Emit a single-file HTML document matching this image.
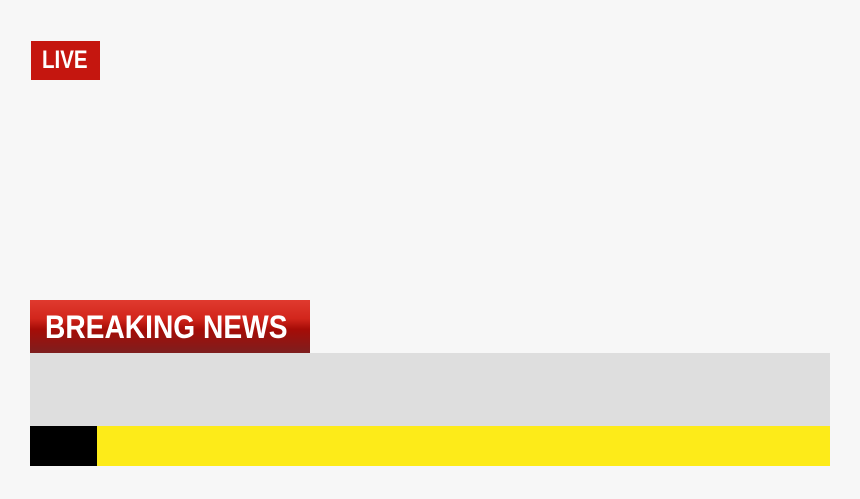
<!DOCTYPE html>
<html><head><style>
body{margin:0;width:860px;height:499px;background:#f7f7f7;position:relative;overflow:hidden;font-family:"Liberation Sans",sans-serif}
div{position:absolute}
.live{left:31px;top:41px;width:69px;height:39px;background:#c5160f}
.t{color:#fff;font-weight:bold;white-space:nowrap;transform-origin:0 0}
.bn{left:30px;top:300px;width:280px;height:53px;background:linear-gradient(#e03a2f 0%,#d2261c 35%,#a60c07 55%,#7d1e1e 100%)}
.grey{left:30px;top:353px;width:800px;height:73px;background:#dedede}
.blk{left:30px;top:426px;width:67px;height:40px;background:#000}
.yel{left:97px;top:426px;width:733px;height:40px;background:#fdeb19}
</style></head><body>
<div class="live"></div>
<div class="t" style="left:42px;top:48px;font-size:25px;line-height:25px;transform:scaleX(0.82)">LIVE</div>
<div class="bn"></div>
<div class="t" style="left:45px;top:311px;font-size:32px;line-height:32px;transform:scaleX(0.88)">BREAKING NEWS</div>
<div class="grey"></div>
<div class="blk"></div>
<div class="yel"></div>
</body></html>
